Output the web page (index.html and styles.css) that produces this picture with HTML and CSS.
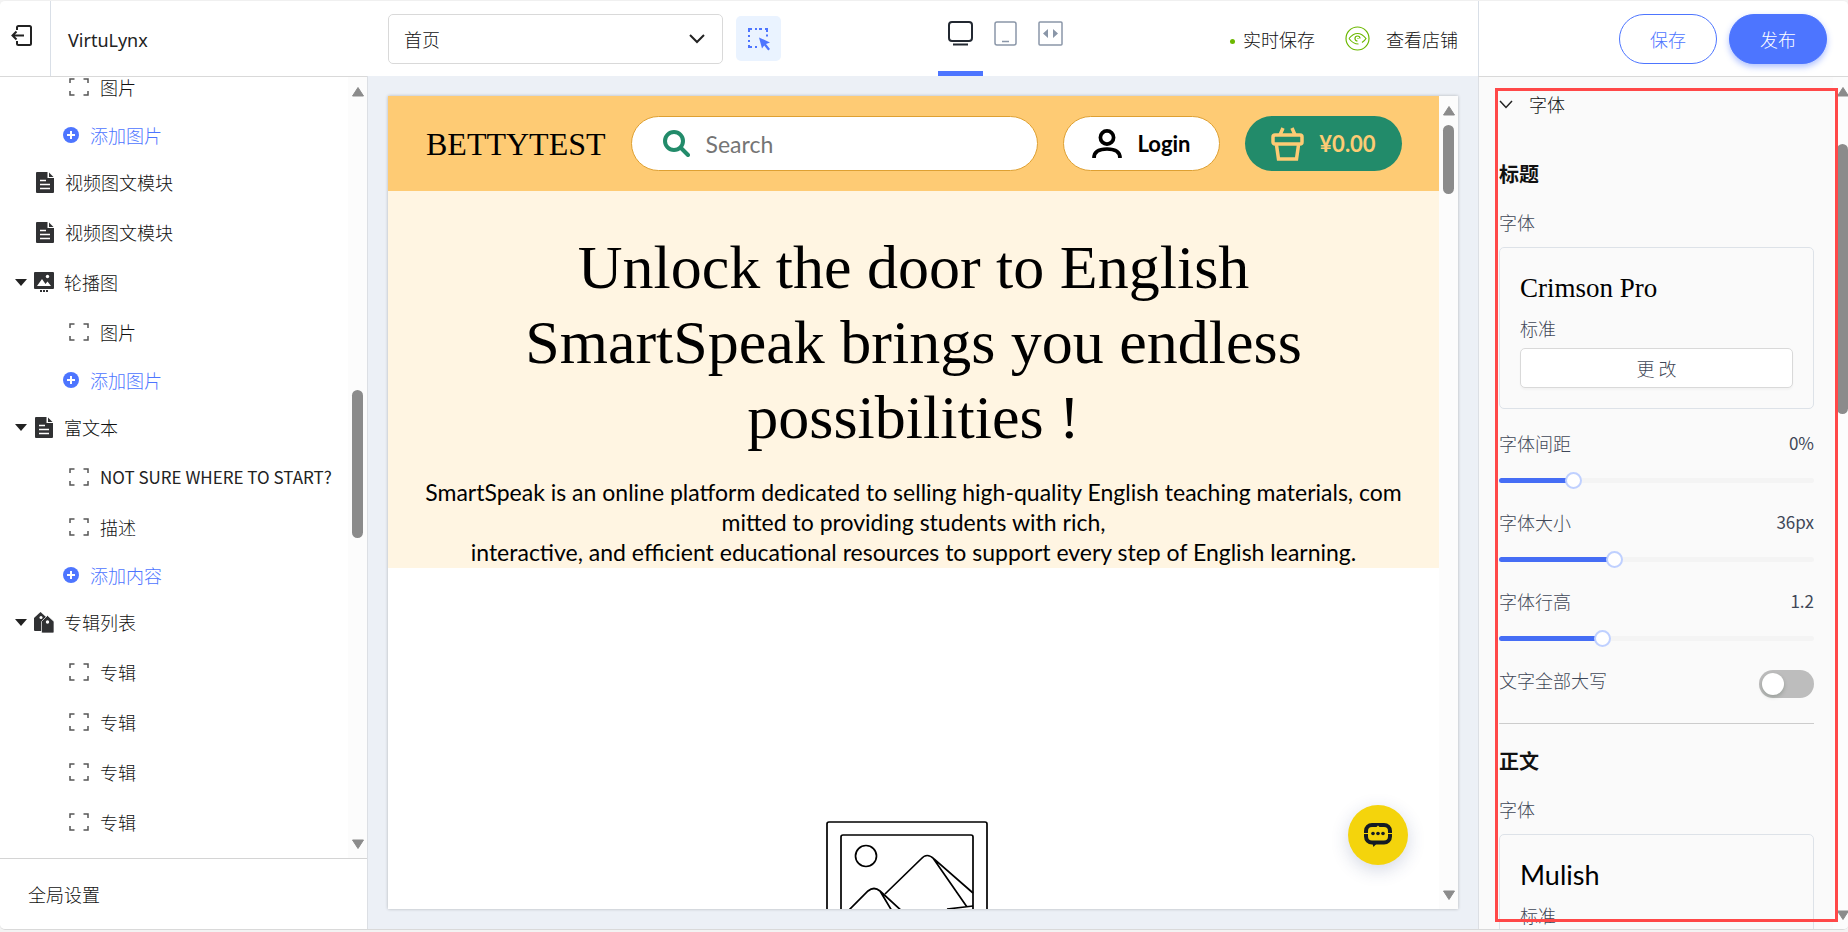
FILE: index.html
```html
<!DOCTYPE html>
<html lang="zh-CN">
<head>
    <meta charset="UTF-8">
    <meta name="viewport" content="width=device-width, initial-scale=1.0">
    <title>VirtuLynx</title>
    <link rel="stylesheet" href="styles.css">
</head>
<body>
    <svg class="sprite" aria-hidden="true">
        <symbol id="i-frame" viewBox="0 0 20 18"><path d="M1 5V1h4.500M14.500 1H19v4M19 13v4h-4.500M5.500 17H1v-4" fill="none" stroke="#555" stroke-width="1.500"/></symbol>
        <symbol id="i-plus" viewBox="0 0 16 16"><circle cx="8" cy="8" r="8" fill="#4d75ff"/><path d="M8 4v8M4 8h8" stroke="#fff" stroke-width="2"/></symbol>
        <symbol id="i-doc" viewBox="0 0 18 21"><path d="M1 0h10.500v6H18v14a1 1 0 0 1-1 1H1a1 1 0 0 1-1-1V1a1 1 0 0 1 1-1z" fill="#303133"/><path d="M13 .5 17.500 5H13z" fill="#303133"/><path d="M4 8.500h6M4 12.500h10M4 16.500h10" stroke="#fff" stroke-width="1.500"/></symbol>
        <symbol id="i-caret" viewBox="0 0 12 7"><path d="M0 0h12L6 7z" fill="#222"/></symbol>
        <symbol id="i-up" viewBox="0 0 12 10"><path d="M6 .5 11.500 9H.5z" fill="#8b8b8b" stroke="#8b8b8b" stroke-linejoin="round"/></symbol>
        <symbol id="i-down" viewBox="0 0 12 10"><path d="M6 9.500 11.500 1H.5z" fill="#8b8b8b" stroke="#8b8b8b" stroke-linejoin="round"/></symbol>
    </svg>

    <div class="app">
        <header class="topbar">
            <button class="exit" aria-label="退出">
                <svg width="21" height="21" viewBox="0 0 21 21" fill="none" stroke="#222" stroke-width="2"><path d="M6 5V2.500A1.500 1.500 0 0 1 7.500 1h11A1.500 1.500 0 0 1 20 2.500v16a1.500 1.500 0 0 1-1.500 1.500h-11A1.500 1.500 0 0 1 6 18.500V16M13 10.500H2M5.500 6.500l-4 4 4 4"/></svg>
            </button>
            <div class="brand">VirtuLynx</div>
            <div class="toolbar">
                <div class="tools">
                    <div class="page-select">
                        <select aria-label="页面"><option>首页</option></select>
                        <svg class="chevron" width="16" height="10" viewBox="0 0 16 10" fill="none" stroke="#222" stroke-width="2"><path d="m1 1 7 7 7-7"/></svg>
                    </div>
                    <button class="pick" aria-label="选择">
                        <svg width="24" height="24" viewBox="0 0 24 24"><path d="M2 5V2h3M8 2h2M12 2h3M18 2h2v3M20 7.500v2M2 8v2M2 13v2M2 18v2h3M8 20h2" fill="none" stroke="#4d75ff" stroke-width="2"/><path d="m12 10.500 11 5-4 1.500 4 5-1.800 1.500-4-5-2.200 3z" fill="#4d75ff"/></svg>
                    </button>
                </div>
                <div class="devices">
                    <button class="device active" aria-label="桌面">
                        <svg width="25" height="25" viewBox="0 0 25 25" fill="none" stroke="#222831" stroke-width="2"><rect x="1" y="1" width="23" height="19" rx="3"/><path d="M5 23.500h15"/></svg>
                    </button>
                    <button class="device" aria-label="平板">
                        <svg width="23" height="25" viewBox="0 0 23 25" fill="none" stroke="#8a96a8" stroke-width="1.500"><rect x="1" y="1" width="21" height="23" rx="2"/><path d="M8 20.500h7"/></svg>
                    </button>
                    <button class="device" aria-label="代码">
                        <svg width="25" height="25" viewBox="0 0 25 25" fill="none" stroke="#8a96a8" stroke-width="1.500"><rect x="1" y="1" width="23" height="23" rx="1"/><path d="M10 8v9l-5-4.500zM15 8v9l5-4.500z" fill="#8a96a8" stroke="none"/></svg>
                    </button>
                </div>
                <div class="status">
                    <span class="dot"></span>
                    <span>实时保存</span>
                    <a class="view" href="#">
                        <svg width="25" height="25" viewBox="0 0 25 25" fill="none" stroke="#6cb800" stroke-width="1.200"><circle cx="12.500" cy="12.500" r="11.500"/><path d="M4 12.500Q8 7.500 12.500 7.500T21 12.500Q19.500 15 17 16.500M4 12.500q4 5.500 9.500 5.500"/><path d="M15 12.500a2.500 2.500 0 1 0-2.500 2.500M12.500 12.500h1"/></svg>
                        查看店铺
                    </a>
                </div>
            </div>
            <div class="actions">
                <button class="btn">保存</button>
                <button class="btn primary">发布</button>
            </div>
        </header>

        <aside class="sidebar">
            <div class="tree-wrap">
                <ul class="tree">
                    <li class="leaf"><svg width="20" height="18"><use href="#i-frame"/></svg>图片</li>
                    <li class="add"><svg width="16" height="16"><use href="#i-plus"/></svg><a href="#">添加图片</a></li>
                    <li class="node"><svg class="mark" width="18" height="21"><use href="#i-doc"/></svg>视频图文模块</li>
                    <li class="node"><svg class="mark" width="18" height="21"><use href="#i-doc"/></svg>视频图文模块</li>
                    <li class="node open">
                        <svg width="12" height="7"><use href="#i-caret"/></svg>
                        <svg class="mark" width="20" height="20" viewBox="0 0 20 20"><rect width="20" height="17" rx="1" fill="#303133"/><path d="m3 14 5-7 3.500 5 2-2.500L17 14z" fill="#fff"/><circle cx="13.500" cy="4.500" r="1.700" fill="#fff"/><path d="M6 19h2M9 19h2M12 19h2" stroke="#303133" stroke-width="2"/></svg>轮播图
                    </li>
                    <li class="leaf"><svg width="20" height="18"><use href="#i-frame"/></svg>图片</li>
                    <li class="add"><svg width="16" height="16"><use href="#i-plus"/></svg><a href="#">添加图片</a></li>
                    <li class="node open"><svg width="12" height="7"><use href="#i-caret"/></svg><svg class="mark" width="18" height="21"><use href="#i-doc"/></svg>富文本</li>
                    <li class="leaf latin"><svg width="20" height="18"><use href="#i-frame"/></svg>NOT SURE WHERE TO START?</li>
                    <li class="leaf"><svg width="20" height="18"><use href="#i-frame"/></svg>描述</li>
                    <li class="add"><svg width="16" height="16"><use href="#i-plus"/></svg><a href="#">添加内容</a></li>
                    <li class="node open">
                        <svg width="12" height="7"><use href="#i-caret"/></svg>
                        <svg class="mark" width="20" height="21" viewBox="0 0 20 21"><path d="M0 6 6.500 0 12 5v14H1a1 1 0 0 1-1-1z" fill="#303133"/><path d="m7.500 9.500 6-6 6.500 6V20a1 1 0 0 1-1 1H8.500a1 1 0 0 1-1-1z" fill="#303133" stroke="#fff" stroke-width=".7"/><circle cx="7" cy="5.500" r="1.500" fill="#fff"/><circle cx="13.500" cy="10" r="1.700" fill="#fff"/></svg>专辑列表
                    </li>
                    <li class="leaf"><svg width="20" height="18"><use href="#i-frame"/></svg>专辑</li>
                    <li class="leaf"><svg width="20" height="18"><use href="#i-frame"/></svg>专辑</li>
                    <li class="leaf"><svg width="20" height="18"><use href="#i-frame"/></svg>专辑</li>
                    <li class="leaf"><svg width="20" height="18"><use href="#i-frame"/></svg>专辑</li>
                </ul>
                <div class="scrollbar scroll-tree" aria-hidden="true">
                    <svg width="12" height="10"><use href="#i-up"/></svg>
                    <div class="track"><div class="thumb"></div></div>
                    <svg width="12" height="10"><use href="#i-down"/></svg>
                </div>
            </div>
            <a class="global" href="#">全局设置</a>
        </aside>

        <main class="canvas">
            <div class="preview">
                <div class="shop">
                    <div class="shop-nav">
                        <div class="shop-name">BETTYTEST</div>
                        <label class="search">
                            <svg width="27" height="27" viewBox="0 0 27 27" fill="none" stroke="#228b6a"><circle cx="11" cy="11" r="9" stroke-width="4"/><path d="m18 18 7 7" stroke-width="4" stroke-linecap="round"/></svg>
                            <input type="text" placeholder="Search" aria-label="Search">
                        </label>
                        <button class="pill login">
                            <svg width="30" height="30" viewBox="0 0 30 30" fill="none" stroke="#000" stroke-width="3.700"><circle cx="15" cy="8.500" r="6.600"/><path d="M2 29c0-6 5-9 13-9s13 3 13 9"/></svg>
                            Login
                        </button>
                        <button class="pill cart">
                            <svg width="33" height="34" viewBox="0 0 33 34" fill="none" stroke="#fdcb74" stroke-width="3.500"><path d="m12 1-3 7M21 1l3 7M5.500 18l2 14h18l2-14"/><rect x="2" y="8" width="29" height="9" rx="2"/></svg>
                            ¥0.00
                        </button>
                    </div>
                    <section class="hero">
                        <h1>Unlock the door to English<br>SmartSpeak brings you endless<br>possibilities !</h1>
                        <p>SmartSpeak is an online platform dedicated to selling high-quality English teaching materials, com<br>mitted to providing students with rich,<br>interactive, and efficient educational resources to support every step of English learning.</p>
                    </section>
                    <div class="picture">
                        <svg width="162" height="160" viewBox="0 0 162 160" fill="none" stroke="#000" stroke-width="1.700">
                            <rect x="1" y="1" width="160" height="170" rx="2"/>
                            <rect x="15" y="14" width="132" height="146" rx="2"/>
                            <circle cx="40" cy="35" r="10.500"/>
                            <path d="M59 73 95 38q6-7 13 0l39 34M107 37l34 49M147 85l-26 3M15 97l27-27q6-5 12 0l24 22M54 70l15 25M59 73"/>
                        </svg>
                    </div>
                </div>
                <div class="scrollbar scroll-page" aria-hidden="true">
                    <svg width="12" height="10"><use href="#i-up"/></svg>
                    <div class="track"><div class="thumb"></div></div>
                    <svg width="12" height="10"><use href="#i-down"/></svg>
                </div>
                <button class="chat" aria-label="客服">
                    <svg width="28" height="24" viewBox="0 0 28 24"><rect x="2" y="2" width="24" height="17.500" rx="6" fill="none" stroke="#141b24" stroke-width="4"/><path d="m8 19 1.500 5L14 19z" fill="#141b24"/><path d="M0 10.500h4.500M23.500 10.500H28" stroke="#f4d40c"/><path d="m12.500 4 1.500-1.500L15.500 4z" fill="#f4d40c"/><circle cx="9" cy="10.500" r="1.800" fill="#141b24"/><circle cx="14" cy="10.500" r="1.800" fill="#141b24"/><circle cx="19" cy="10.500" r="1.800" fill="#141b24"/></svg>
                </button>
            </div>
        </main>

        <aside class="settings">
            <div class="panel">
                <button class="panel-head">
                    <svg width="14" height="9" viewBox="0 0 14 9" fill="none" stroke="#222" stroke-width="1.500"><path d="m1 1 6 6.500L13 1"/></svg>
                    字体
                </button>
                <section class="group">
                    <h3>标题</h3>
                    <div class="field-label">字体</div>
                    <div class="font-card">
                        <div class="font-name serif">Crimson Pro</div>
                        <div class="font-style">标准</div>
                        <button class="change">更 改</button>
                    </div>
                    <div class="control">
                        <label for="spacing">字体间距</label><output for="spacing">0%</output>
                        <input type="range" id="spacing" min="0" max="100" value="22" style="--value: 22%">
                    </div>
                    <div class="control">
                        <label for="size">字体大小</label><output for="size">36px</output>
                        <input type="range" id="size" min="0" max="100" value="36" style="--value: 36%">
                    </div>
                    <div class="control">
                        <label for="leading">字体行高</label><output for="leading">1.2</output>
                        <input type="range" id="leading" min="0" max="100" value="32" style="--value: 32%">
                    </div>
                    <div class="switch-row">
                        <label for="upper">文字全部大写</label>
                        <input type="checkbox" class="switch" id="upper">
                    </div>
                </section>
                <section class="group">
                    <h3>正文</h3>
                    <div class="field-label">字体</div>
                    <div class="font-card">
                        <div class="font-name sans">Mulish</div>
                        <div class="font-style">标准</div>
                        <button class="change">更 改</button>
                    </div>
                </section>
            </div>
            <div class="scrollbar scroll-panel" aria-hidden="true">
                <svg width="12" height="10"><use href="#i-up"/></svg>
                <div class="track"><div class="thumb"></div></div>
                <svg width="12" height="10"><use href="#i-down"/></svg>
            </div>
            <div class="highlight"></div>
        </aside>
    </div>
</body>
</html>
```

FILE: styles.css
```css
* {
    box-sizing: border-box;
}
body {
    margin: 0;
    background-color: #f3f3f3;
    color: #111;
    font-family: "Noto Sans CJK SC", sans-serif;
    font-size: 18px;
    font-weight: 300;
    line-height: 28px;
}
button, select, input {
    font: inherit;
    color: inherit;
    margin: 0;
}
button {
    display: flex;
    align-items: center;
    justify-content: center;
    padding: 0;
    border: none;
    background: none;
    cursor: pointer;
}
a {
    color: inherit;
    text-decoration: none;
}
svg {
    flex: none;
}
.sprite {
    position: absolute;
    width: 0;
    height: 0;
}
.app {
    display: grid;
    grid-template: 75px minmax(0, 1fr) / 368px minmax(0, 1fr) 370px;
    height: calc(100vh - 2px);
    border-top: 1px solid #f0f0f0;
    border-bottom: 1px solid #d9d9d9;
    border-radius: 5px;
    background-color: #fff;
    overflow: hidden;
}

/* top bar */
.topbar {
    grid-column: 1 / -1;
    display: grid;
    grid-template-columns: 51px 317px minmax(0, 1fr) 370px;
}
.exit {
    padding-bottom: 6px;
    padding-right: 8px;
    border-right: 1px solid #d9dfe7;
}
.exit, .brand, .actions {
    box-shadow: 0 1px 0 #d9d9d9;
}
.brand {
    display: flex;
    align-items: center;
    padding: 2px 17px 0;
    color: #222;
    font-family: "Noto Sans", sans-serif;
    font-weight: 400;
}
.toolbar {
    display: flex;
    justify-content: space-between;
    padding: 0 20px;
}
.tools {
    display: flex;
    align-items: center;
    gap: 13px;
}
.page-select {
    position: relative;
}
.page-select select {
    display: block;
    appearance: none;
    width: 335px;
    height: 50px;
    padding: 0 15px;
    border: 1px solid #d9d9d9;
    border-radius: 5px;
    background-color: #fff;
}
.chevron {
    position: absolute;
    right: 18px;
    top: 20px;
    pointer-events: none;
}
.pick {
    width: 45px;
    height: 45px;
    border-radius: 5px;
    background-color: #eaf3ff;
}
.devices {
    display: flex;
}
.device {
    width: 45px;
    padding-bottom: 6px;
    border-bottom: 5px solid transparent;
}
.device.active {
    border-color: #4d75ff;
}
.status {
    display: flex;
    align-items: center;
    gap: 8px;
}
.dot {
    width: 5px;
    height: 5px;
    border-radius: 50%;
    margin-top: 5px;
    background-color: #6cb800;
}
.view {
    display: flex;
    align-items: center;
    gap: 16px;
    margin-left: 22px;
}
.actions {
    display: flex;
    align-items: center;
    justify-content: flex-end;
    gap: 12px;
    padding-right: 21px;
    border-left: 1px solid #d9dfe7;
}
.btn {
    width: 98px;
    height: 50px;
    border: 1px solid #4d75ff;
    border-radius: 25px;
    color: #4d75ff;
}
.btn.primary {
    background-color: #4d75ff;
    color: #fff;
    box-shadow: 0 3px 6px rgba(77, 117, 255, 0.45);
}

/* scrollbars */
.scrollbar {
    flex: none;
    display: flex;
    flex-direction: column;
    align-items: center;
    width: 19px;
    padding: 10px 0 9px;
    background-color: #fcfcfc;
}
.track {
    flex: 1;
    display: flex;
    flex-direction: column;
    margin: 4px 0;
}
.track::before {
    content: "";
    flex: var(--before);
}
.track::after {
    content: "";
    flex: var(--after);
}
.thumb {
    flex: var(--size);
    width: 11px;
    border-radius: 6px;
    background-color: #8b8b8b;
}
.scroll-tree {
    --before: 289;
    --size: 149;
    --after: 297;
}
.scroll-page {
    --before: 5;
    --size: 69;
    --after: 692;
}
.scroll-panel {
    --before: 43;
    --size: 268;
    --after: 488;
    margin-right: -4px;
}

/* left tree */
.sidebar {
    display: flex;
    flex-direction: column;
    min-height: 0;
    border-right: 1px solid #dcdfe4;
}
.tree-wrap {
    flex: 1;
    display: flex;
    min-height: 0;
    margin-top: 1px;
    overflow: hidden;
}
.tree {
    flex: 1;
    margin: -15px 0 0;
    padding: 0;
    list-style: none;
}
.tree li {
    display: flex;
    align-items: center;
    height: 50px;
    white-space: nowrap;
}
.tree .leaf {
    gap: 11px;
    padding-left: 69px;
}
.tree .latin {
    color: #222;
    font-size: 17px;
    font-weight: 400;
}
.tree .add {
    gap: 11px;
    height: 45px;
    padding-left: 63px;
    color: #4d75ff;
}
.tree .node {
    padding-left: 35px;
}
.tree .node.open {
    padding-left: 15px;
}
.tree .open .mark {
    margin-left: 7px;
}
.tree .mark {
    width: 20px;
    margin-right: 10px;
}
.global {
    padding: 21px 28px;
    border-top: 1px solid #d4d4d4;
}

/* shop preview */
.canvas {
    display: flex;
    min-height: 0;
    padding: 20px;
    background-color: #ecf0f6;
}
.preview {
    position: relative;
    flex: 1;
    display: flex;
    min-width: 0;
    background-color: #fff;
    box-shadow: 0 0 3px rgba(0, 0, 0, 0.25);
    overflow: hidden;
}
.shop {
    flex: 1;
    min-width: 0;
    color: #000;
    font-family: Lato, sans-serif;
    font-weight: 400;
}
.shop-nav {
    display: flex;
    align-items: center;
    gap: 25px;
    height: 95px;
    padding: 0 37px 0 38px;
    background-color: #fecb74;
}
.shop-name {
    font-family: "Liberation Serif", serif;
    font-size: 32px;
}
.search {
    flex: 1;
    display: flex;
    align-items: center;
    gap: 16px;
    min-width: 0;
    height: 55px;
    padding: 0 31px;
    border: 1px solid #dea032;
    border-radius: 28px;
    background-color: #fff;
    font-size: 23px;
}
.search input {
    flex: 1;
    min-width: 0;
    padding: 0;
    border: none;
    outline: none;
    background: none;
}
.search input::placeholder {
    color: #757575;
}
.pill {
    gap: 15px;
    width: 157px;
    height: 55px;
    border-radius: 28px;
    font-size: 22px;
    font-weight: 700;
}
.login {
    border: 1px solid #dea032;
    background-color: #fff;
}
.cart {
    background-color: #228b6a;
    color: #fdcb74;
}
.hero {
    padding: 39px 0 1px;
    background-color: #fff5e2;
    text-align: center;
    white-space: nowrap;
}
.hero h1 {
    margin: 0 0 22px;
    font-family: "Liberation Serif", serif;
    font-size: 62px;
    font-weight: 400;
    line-height: 75px;
}
.hero p {
    margin: 0;
    font-size: 23px;
    line-height: 30px;
}
.picture {
    display: flex;
    justify-content: center;
    margin-top: 253px;
    padding-right: 13px;
}
.chat {
    position: absolute;
    right: 50px;
    bottom: 44px;
    width: 60px;
    height: 60px;
    border-radius: 50%;
    background-color: #f4d40c;
    box-shadow: 0 5px 18px rgba(40, 60, 120, 0.2);
}

/* font settings */
.settings {
    position: relative;
    display: flex;
    min-height: 0;
    margin-top: 1px;
    border-left: 1px solid #dcdfe4;
    background-color: #fafafa;
    overflow: hidden;
}
.panel {
    flex: 1;
    min-width: 0;
    padding: 0 19px 0 20px;
}
.panel-head {
    gap: 16px;
    height: 54px;
    margin-bottom: 6px;
}
.group {
    padding-top: 22px;
}
.group + .group {
    border-top: 1px solid #ccc;
}
.group h3 {
    margin: 0 0 19px;
    font-size: 20px;
    line-height: 30px;
}
.field-label, .font-style, .control, .switch-row, .change {
    color: #3f4757;
}
.font-card {
    margin: 11px 0 20px;
    padding: 20px;
    border: 1px solid #dde2e8;
    border-radius: 5px;
}
.font-name {
    margin-bottom: 6px;
    color: #000;
    font-size: 27px;
    font-weight: 400;
    line-height: 40px;
}
.serif {
    font-family: "Liberation Serif", serif;
}
.sans {
    font-family: Lato, sans-serif;
}
.change {
    width: 100%;
    height: 40px;
    margin-top: 6px;
    border: 1px solid #d9d9d9;
    border-radius: 5px;
    background-color: #fff;
    box-shadow: 0 2px 2px rgba(0, 0, 0, 0.03);
}
.control {
    display: grid;
    grid-template-columns: 1fr auto;
    row-gap: 14px;
    margin-bottom: 19px;
}
.control output {
    font-size: 17px;
    font-weight: 400;
}
.control input {
    grid-column: 1 / -1;
    appearance: none;
    width: 100%;
    height: 18px;
    background: none;
}
.control input::-webkit-slider-runnable-track {
    height: 5px;
    border-radius: 3px;
    background: linear-gradient(to right, #456df5 var(--value), #f4f4f4 var(--value));
}
.control input::-webkit-slider-thumb {
    appearance: none;
    width: 17px;
    height: 17px;
    margin-top: -6px;
    border: 2px solid #bfd0ff;
    border-radius: 50%;
    background-color: #fff;
}
.switch-row {
    display: flex;
    justify-content: space-between;
    align-items: flex-start;
    padding-bottom: 25px;
}
.switch {
    appearance: none;
    display: flex;
    align-items: center;
    width: 55px;
    height: 28px;
    margin-top: 4px;
    padding: 0 3px;
    border-radius: 14px;
    background-color: #bdbdbd;
}
.switch::before {
    content: "";
    width: 22px;
    height: 22px;
    border-radius: 50%;
    background-color: #fff;
    box-shadow: 0 2px 4px rgba(0, 35, 11, 0.2);
}
.switch:checked {
    justify-content: flex-end;
    background-color: #4d75ff;
}
.highlight {
    position: absolute;
    inset: 11px 10px 7px 16px;
    border: 3px solid #ff4848;
    pointer-events: none;
}
```
